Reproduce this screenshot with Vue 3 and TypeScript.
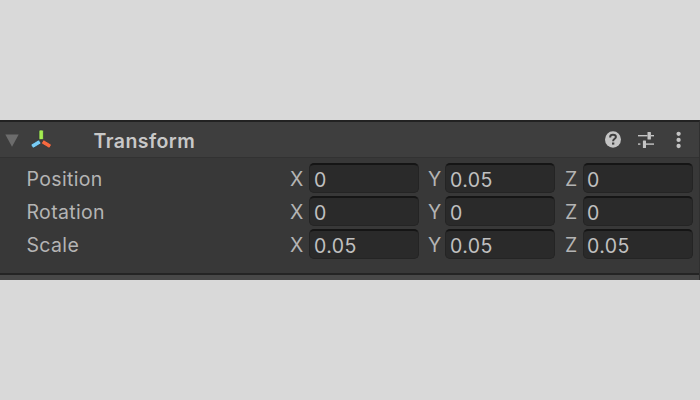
<script setup lang="ts">
interface Axis {
  name: string
  value: string
}
interface Row {
  label: string
  axes: Axis[]
}

const toAxes = (x: string, y: string, z: string): Axis[] => [
  { name: 'X', value: x },
  { name: 'Y', value: y },
  { name: 'Z', value: z },
]

const rows: Row[] = [
  { label: 'Position', axes: toAxes('0', '0.05', '0') },
  { label: 'Rotation', axes: toAxes('0', '0', '0') },
  { label: 'Scale', axes: toAxes('0.05', '0.05', '0.05') },
]
</script>

<template>
  <main class="page">
    <section class="panel">
      <header class="header">
        <svg class="fold" width="14" height="13" viewBox="0 0 14 13"><path d="M0.3 0.5H13.7L7 12.7Z" fill="#6c6c6c" /></svg>
        <svg class="gizmo" width="24" height="22" viewBox="0 0 24 22">
          <g stroke="#30363a" stroke-width="0.7">
            <rect x="10" y="1" width="4.4" height="9.6" rx="1.2" fill="#a4ed50" />
            <rect x="10" y="1" width="4.4" height="9.6" rx="1.2" fill="#78ccf5" transform="rotate(-121 12.2 11.9)" />
            <rect x="10" y="1" width="4.4" height="9.6" rx="1.2" fill="#f7693f" transform="rotate(121 12.2 11.9)" />
          </g>
        </svg>
        <h1 class="title">Transform</h1>
        <div class="tools">
          <svg width="16" height="17" viewBox="0 0 16 17" fill="none">
            <ellipse cx="8" cy="8.5" rx="8" ry="8.2" fill="#c4c4c4" />
            <path d="M5.2 6.6V5.9C5.2 4.5 6.3 3.7 8 3.7C9.8 3.7 10.9 4.6 10.9 6C10.9 7.9 8.1 7.8 8.1 10.3" stroke="#3e3e3e" stroke-width="2" />
            <rect x="7" y="11.5" width="2.3" height="2.1" fill="#3e3e3e" />
          </svg>
          <svg width="16" height="16" viewBox="0 0 16 16" fill="#c4c4c4">
            <rect x="0" y="3" width="9.5" height="1.4" />
            <rect x="9.5" y="0" width="3.4" height="7.6" rx="0.5" />
            <rect x="13" y="3" width="3" height="1.4" />
            <rect x="0" y="11.4" width="2.4" height="1.4" />
            <rect x="4.9" y="8.4" width="3.1" height="7.6" rx="0.5" />
            <rect x="8" y="11.4" width="8" height="1.4" />
          </svg>
          <svg width="6" height="18" viewBox="0 0 6 18" fill="#c4c4c4">
            <circle cx="2.6" cy="2.8" r="2.15" /><circle cx="2.6" cy="8.9" r="2.15" /><circle cx="2.6" cy="15" r="2.15" />
          </svg>
        </div>
      </header>
      <div class="body">
        <div v-for="row in rows" :key="row.label" class="row">
          <span class="label">{{ row.label }}</span>
          <label v-for="axis in row.axes" :key="axis.name" class="axis">
            <span class="name">{{ axis.name }}</span>
            <span class="field">{{ axis.value }}</span>
          </label>
        </div>
      </div>
      <footer class="footer"></footer>
    </section>
  </main>
</template>

<style>
body {
  background: #d9d9d9;
}
</style>

<style scoped>
* {
  box-sizing: border-box;
}
.page {
  height: 400px;
  display: flex;
  flex-direction: column;
  justify-content: center;
  font-family: Inter, 'Liberation Sans', sans-serif;
  font-size: 19.5px;
  color: #c0c0c0;
}
.panel {
  height: 160px;
  display: flex;
  flex-direction: column;
  background: #383838;
  border-top: 2px solid #222;
  border-right: 1px solid #303030;
}
.header {
  height: 36px;
  flex: none;
  display: flex;
  align-items: center;
  padding: 0 17px 0 5px;
  background: #3e3e3e;
  border-bottom: 1px solid #323232;
}
.fold {
  margin-top: 1px;
}
.gizmo {
  margin-left: 10px;
}
.title {
  margin: 2px 0 0 40.5px;
  font-size: 19.5px;
  font-weight: 600;
  letter-spacing: 0.45px;
  line-height: 24px;
  color: #c8c8c8;
}
.tools {
  display: flex;
  align-items: center;
  gap: 17px;
  margin-left: auto;
}
.tools svg:last-child {
  margin-left: 5px;
}
.body {
  flex: 1;
  display: flex;
  flex-direction: column;
  gap: 3px;
  padding: 5px 0 0 27px;
}
.row {
  display: flex;
  height: 30px;
}
.label {
  width: 263px;
  flex: none;
  margin-left: -0.5px;
  margin-right: 0.5px;
  font-size: 19.5px;
  line-height: 33px;
  letter-spacing: 0.35px;
  color: #b4b4b4;
}
.axis {
  display: flex;
  flex: none;
}
.name {
  width: 19px;
  flex: none;
  line-height: 33px;
  color: #b4b4b4;
}
.axis + .axis .name {
  width: 26px;
  padding-left: 9px;
}
.axis + .axis + .axis .name {
  width: 28px;
  padding-left: 10px;
}
.field {
  width: 110px;
  height: 30px;
  flex: none;
  padding-left: 4px;
  line-height: 30px;
  letter-spacing: 0.45px;
  background: #2a2a2a;
  border: 1px solid #242424;
  border-top: 2px solid #151515;
  border-radius: 5px;
}
.axis:last-child .field {
  padding-left: 3px;
}
.footer {
  height: 7px;
  flex: none;
  background: #484848;
  border-top: 2px solid #242424;
}
</style>
